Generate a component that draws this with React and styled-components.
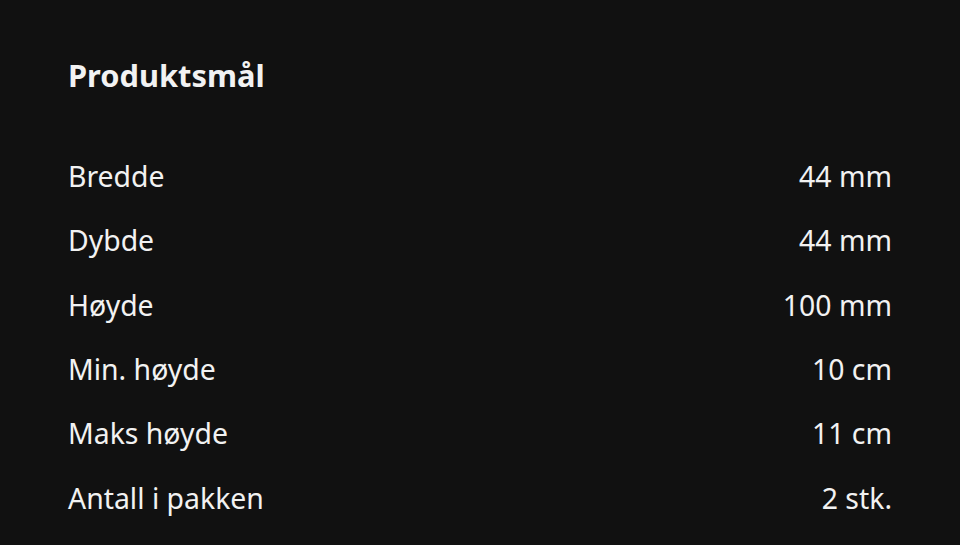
import React from "react";
import styled, { createGlobalStyle } from "styled-components";

const GlobalStyle = createGlobalStyle`
	html, body {
		margin: 0;
		padding: 0;
		background: #111111;
	}
	body {
		font-family: "Noto Sans", "Open Sans", sans-serif;
		color: #f2f2f2;
	}
`;

const Panel = styled.section`
	box-sizing: border-box;
	width: 960px;
	height: 545px;
	padding: 52px 68px 0;
	background: #111111;
`;

const Title = styled.h2`
	margin: 0 0 46px;
	font-size: 30.8px;
	line-height: 46px;
	font-weight: 700;
`;

const SpecList = styled.dl`
	margin: 0;
	display: flex;
	flex-direction: column;
`;

const SpecRow = styled.div`
	display: flex;
	justify-content: space-between;
	align-items: center;
	height: 64.3px;
	font-size: 28.4px;
`;

const Label = styled.dt`
	margin: 0;
`;

const Value = styled.dd`
	margin: 0;
`;

const specs = [
	["Bredde", "44 mm"],
	["Dybde", "44 mm"],
	["Høyde", "100 mm"],
	["Min. høyde", "10 cm"],
	["Maks høyde", "11 cm"],
	["Antall i pakken", "2 stk."],
];

function App() {
	return (
		<>
			<GlobalStyle />
			<Panel>
				<Title>Produktsmål</Title>
				<SpecList>
					{specs.map(([label, value]) => (
						<SpecRow key={label}>
							<Label>{label}</Label>
							<Value>{value}</Value>
						</SpecRow>
					))}
				</SpecList>
			</Panel>
		</>
	);
}

export default App;
